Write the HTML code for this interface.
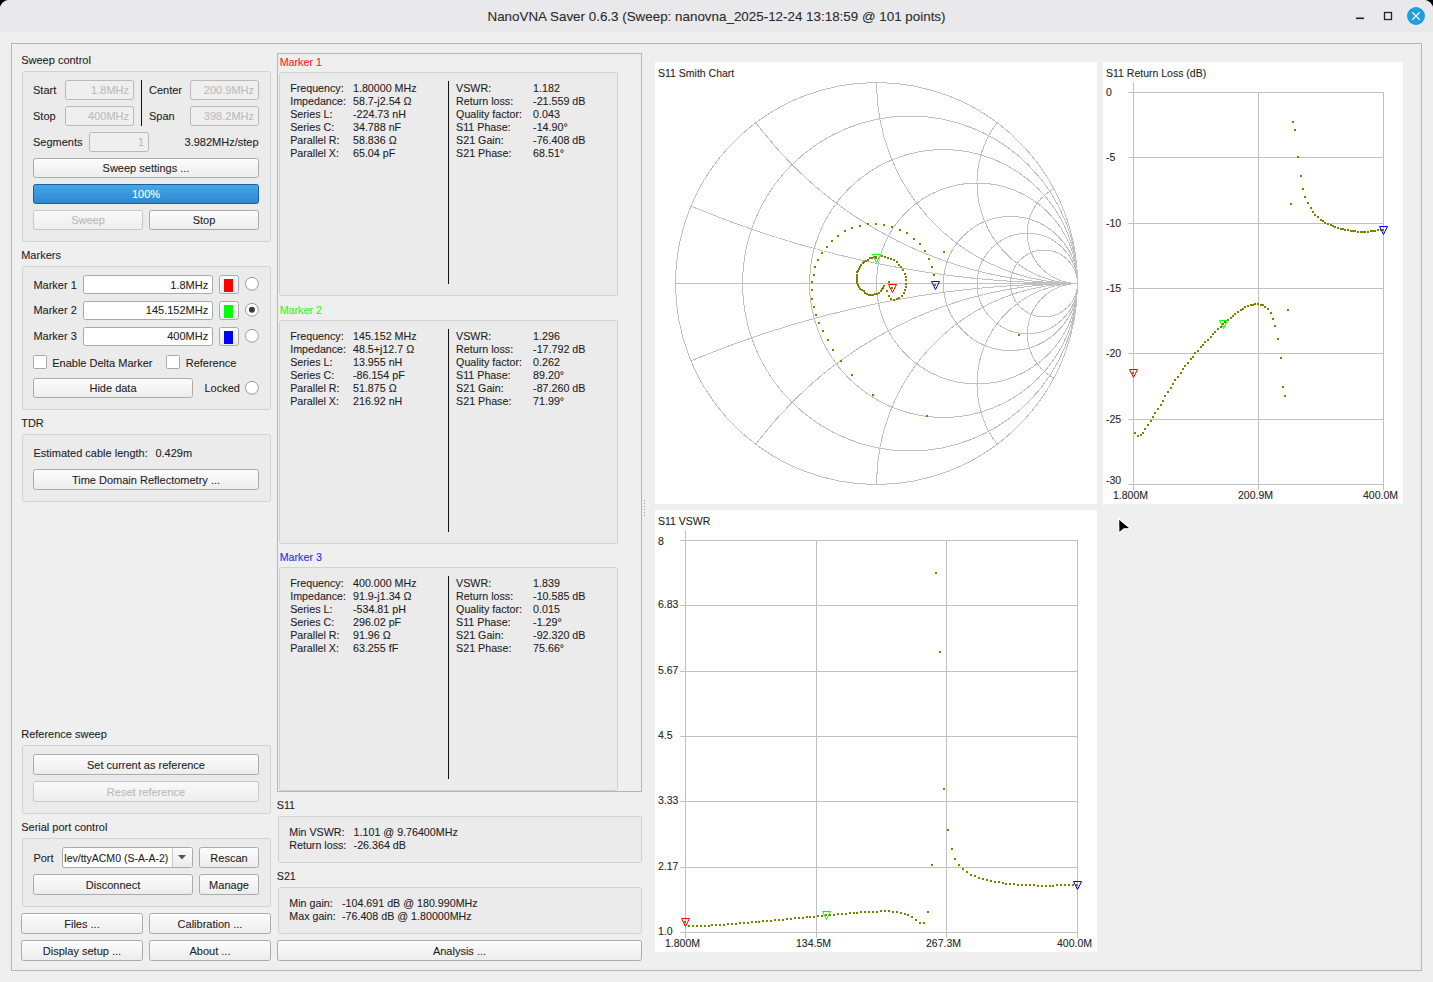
<!DOCTYPE html>
<html><head><meta charset="utf-8"><style>
html,body{margin:0;padding:0;background:#000;overflow:hidden;}
svg{display:block;font-family:"Liberation Sans", sans-serif;}

</style></head><body>
<svg width="1433" height="982" viewBox="0 0 1433 982">
<defs>
<linearGradient id="btn" x1="0" y1="0" x2="0" y2="1"><stop offset="0" stop-color="#fdfdfd"/><stop offset="1" stop-color="#ececec"/></linearGradient>
<linearGradient id="btnd" x1="0" y1="0" x2="0" y2="1"><stop offset="0" stop-color="#f9f9f9"/><stop offset="1" stop-color="#eeeeee"/></linearGradient>
<linearGradient id="prog" x1="0" y1="0" x2="0" y2="1"><stop offset="0" stop-color="#45a8ea"/><stop offset="1" stop-color="#2f87cf"/></linearGradient>
<linearGradient id="combo" x1="0" y1="0" x2="0" y2="1"><stop offset="0" stop-color="#fbfbfb"/><stop offset="1" stop-color="#ececec"/></linearGradient>
</defs>
<rect x="0" y="0" width="1433" height="982" fill="#000"/>
<path d="M0,9 A9,9 0 0,1 9,0 L1424,0 A9,9 0 0,1 1433,9 L1433,982 L0,982 Z" fill="#efefef"/>
<path d="M0,9 A9,9 0 0,1 9,0 L1424,0 A9,9 0 0,1 1433,9 L1433,32 L0,32 Z" fill="#e9e9eb"/>
<text x="716.5" y="21.3" font-size="13.4" fill="#2b2b2b" stroke="#2b2b2b" stroke-width="0.1" text-anchor="middle" font-weight="normal" >NanoVNA Saver 0.6.3 (Sweep: nanovna_2025-12-24 13:18:59 @ 101 points)</text>
<rect x="1356" y="17.5" width="8" height="1.6" fill="#222" stroke="none" stroke-width="1" rx="0" />
<rect x="1384.5" y="12.5" width="7" height="7" fill="none" stroke="#222" stroke-width="1.3" rx="0" />
<circle cx="1416" cy="16" r="9" fill="#1e9de0"/>
<path d="M1412.3,12.3 L1419.7,19.7 M1419.7,12.3 L1412.3,19.7" stroke="#fff" stroke-width="1.3"/>
<rect x="11.5" y="43.5" width="1410" height="927" fill="none" stroke="#b5b5b5" stroke-width="1" rx="0" />
<text x="21.2" y="64" font-size="11" fill="#1f1f1f" stroke="#1f1f1f" stroke-width="0.1" text-anchor="start" font-weight="normal" >Sweep control</text>
<rect x="22.5" y="71.5" width="248" height="170" fill="#ebebeb" stroke="#d2d2d2" stroke-width="1" rx="2" />
<text x="33" y="93.7" font-size="11" fill="#1f1f1f" stroke="#1f1f1f" stroke-width="0.1" text-anchor="start" font-weight="normal" >Start</text>
<rect x="65.5" y="80.5" width="68" height="19" fill="#efefef" stroke="#b9b9b9" stroke-width="1" rx="2" />
<text x="129" y="93.7" font-size="11" fill="#bcbcbc" stroke="#bcbcbc" stroke-width="0.1" text-anchor="end" font-weight="normal" >1.8MHz</text>
<line x1="141.5" y1="80" x2="141.5" y2="126" stroke="#111" stroke-width="1" />
<text x="149" y="93.7" font-size="11" fill="#1f1f1f" stroke="#1f1f1f" stroke-width="0.1" text-anchor="start" font-weight="normal" >Center</text>
<rect x="190.5" y="80.5" width="68" height="19" fill="#efefef" stroke="#b9b9b9" stroke-width="1" rx="2" />
<text x="254" y="93.7" font-size="11" fill="#bcbcbc" stroke="#bcbcbc" stroke-width="0.1" text-anchor="end" font-weight="normal" >200.9MHz</text>
<text x="33" y="119.5" font-size="11" fill="#1f1f1f" stroke="#1f1f1f" stroke-width="0.1" text-anchor="start" font-weight="normal" >Stop</text>
<rect x="65.5" y="106.5" width="68" height="19" fill="#efefef" stroke="#b9b9b9" stroke-width="1" rx="2" />
<text x="129" y="119.5" font-size="11" fill="#bcbcbc" stroke="#bcbcbc" stroke-width="0.1" text-anchor="end" font-weight="normal" >400MHz</text>
<text x="149" y="119.5" font-size="11" fill="#1f1f1f" stroke="#1f1f1f" stroke-width="0.1" text-anchor="start" font-weight="normal" >Span</text>
<rect x="190.5" y="106.5" width="68" height="19" fill="#efefef" stroke="#b9b9b9" stroke-width="1" rx="2" />
<text x="254" y="119.5" font-size="11" fill="#bcbcbc" stroke="#bcbcbc" stroke-width="0.1" text-anchor="end" font-weight="normal" >398.2MHz</text>
<text x="33" y="145.7" font-size="11" fill="#1f1f1f" stroke="#1f1f1f" stroke-width="0.1" text-anchor="start" font-weight="normal" >Segments</text>
<rect x="89.5" y="132.5" width="59" height="19" fill="#efefef" stroke="#b9b9b9" stroke-width="1" rx="2" />
<text x="144" y="145.7" font-size="11" fill="#bcbcbc" stroke="#bcbcbc" stroke-width="0.1" text-anchor="end" font-weight="normal" >1</text>
<text x="258.5" y="145.7" font-size="11" fill="#1f1f1f" stroke="#1f1f1f" stroke-width="0.1" text-anchor="end" font-weight="normal" >3.982MHz/step</text>
<rect x="33.5" y="158.5" width="225" height="19" fill="url(#btn)" stroke="#ababab" stroke-width="1" rx="2" />
<text x="146.0" y="171.7" font-size="11" fill="#1f1f1f" stroke="#1f1f1f" stroke-width="0.1" text-anchor="middle" font-weight="normal" >Sweep settings ...</text>
<rect x="33.5" y="184.5" width="225" height="19" fill="url(#prog)" stroke="#1d5f99" stroke-width="1" rx="2" />
<text x="146" y="197.7" font-size="11" fill="#ffffff" stroke="#ffffff" stroke-width="0.1" text-anchor="middle" font-weight="normal" >100%</text>
<rect x="33.5" y="210.5" width="109" height="19" fill="url(#btnd)" stroke="#c8c8c8" stroke-width="1" rx="2" />
<text x="88.0" y="223.8" font-size="11" fill="#b9b9b9" stroke="#b9b9b9" stroke-width="0.1" text-anchor="middle" font-weight="normal" >Sweep</text>
<rect x="149.5" y="210.5" width="109" height="19" fill="url(#btn)" stroke="#ababab" stroke-width="1" rx="2" />
<text x="204.0" y="223.8" font-size="11" fill="#1f1f1f" stroke="#1f1f1f" stroke-width="0.1" text-anchor="middle" font-weight="normal" >Stop</text>
<text x="21.2" y="258.5" font-size="11" fill="#1f1f1f" stroke="#1f1f1f" stroke-width="0.1" text-anchor="start" font-weight="normal" >Markers</text>
<rect x="22.5" y="266.5" width="248" height="143" fill="#ebebeb" stroke="#d2d2d2" stroke-width="1" rx="2" />
<text x="33.4" y="288.5" font-size="11" fill="#1f1f1f" stroke="#1f1f1f" stroke-width="0.1" text-anchor="start" font-weight="normal" >Marker 1</text>
<rect x="83.5" y="275.5" width="129" height="18" fill="#ffffff" stroke="#a9a9a9" stroke-width="1" rx="2" />
<text x="208.2" y="288.5" font-size="11" fill="#1f1f1f" stroke="#1f1f1f" stroke-width="0.1" text-anchor="end" font-weight="normal" >1.8MHz</text>
<rect x="219.5" y="275.5" width="19" height="18" fill="url(#btn)" stroke="#ababab" stroke-width="1" rx="2" />
<text x="229.0" y="288.5" font-size="11" fill="#1f1f1f" stroke="#1f1f1f" stroke-width="0.1" text-anchor="middle" font-weight="normal" ></text>
<rect x="224" y="279" width="9" height="13" fill="#ff0000" stroke="none" stroke-width="1" rx="0" />
<circle cx="251.9" cy="283.8" r="6.4" fill="#fff" stroke="#9a9a9a" stroke-width="1"/>
<text x="33.4" y="314.3" font-size="11" fill="#1f1f1f" stroke="#1f1f1f" stroke-width="0.1" text-anchor="start" font-weight="normal" >Marker 2</text>
<rect x="83.5" y="301.5" width="129" height="18" fill="#ffffff" stroke="#a9a9a9" stroke-width="1" rx="2" />
<text x="208.2" y="314.3" font-size="11" fill="#1f1f1f" stroke="#1f1f1f" stroke-width="0.1" text-anchor="end" font-weight="normal" >145.152MHz</text>
<rect x="219.5" y="301.5" width="19" height="18" fill="url(#btn)" stroke="#ababab" stroke-width="1" rx="2" />
<text x="229.0" y="314.5" font-size="11" fill="#1f1f1f" stroke="#1f1f1f" stroke-width="0.1" text-anchor="middle" font-weight="normal" ></text>
<rect x="224" y="305" width="9" height="13" fill="#00ff00" stroke="none" stroke-width="1" rx="0" />
<circle cx="251.9" cy="309.8" r="6.4" fill="#fff" stroke="#9a9a9a" stroke-width="1"/>
<circle cx="251.9" cy="309.8" r="3" fill="#3a3a3a"/>
<text x="33.4" y="340.2" font-size="11" fill="#1f1f1f" stroke="#1f1f1f" stroke-width="0.1" text-anchor="start" font-weight="normal" >Marker 3</text>
<rect x="83.5" y="327.5" width="129" height="18" fill="#ffffff" stroke="#a9a9a9" stroke-width="1" rx="2" />
<text x="208.2" y="340.2" font-size="11" fill="#1f1f1f" stroke="#1f1f1f" stroke-width="0.1" text-anchor="end" font-weight="normal" >400MHz</text>
<rect x="219.5" y="327.5" width="19" height="18" fill="url(#btn)" stroke="#ababab" stroke-width="1" rx="2" />
<text x="229.0" y="340.5" font-size="11" fill="#1f1f1f" stroke="#1f1f1f" stroke-width="0.1" text-anchor="middle" font-weight="normal" ></text>
<rect x="224" y="331" width="9" height="13" fill="#0000ff" stroke="none" stroke-width="1" rx="0" />
<circle cx="251.9" cy="335.8" r="6.4" fill="#fff" stroke="#9a9a9a" stroke-width="1"/>
<rect x="33.5" y="355.5" width="13" height="13" fill="#ffffff" stroke="#a9a9a9" stroke-width="1" rx="1" />
<text x="52.2" y="366.6" font-size="11" fill="#1f1f1f" stroke="#1f1f1f" stroke-width="0.1" text-anchor="start" font-weight="normal" >Enable Delta Marker</text>
<rect x="166.5" y="355.5" width="13" height="13" fill="#ffffff" stroke="#a9a9a9" stroke-width="1" rx="1" />
<text x="185.7" y="366.6" font-size="11" fill="#1f1f1f" stroke="#1f1f1f" stroke-width="0.1" text-anchor="start" font-weight="normal" >Reference</text>
<rect x="33.5" y="378.5" width="159" height="19" fill="url(#btn)" stroke="#ababab" stroke-width="1" rx="2" />
<text x="113.0" y="391.5" font-size="11" fill="#1f1f1f" stroke="#1f1f1f" stroke-width="0.1" text-anchor="middle" font-weight="normal" >Hide data</text>
<text x="204.5" y="391.5" font-size="11" fill="#1f1f1f" stroke="#1f1f1f" stroke-width="0.1" text-anchor="start" font-weight="normal" >Locked</text>
<circle cx="251.9" cy="387.8" r="6.4" fill="#fff" stroke="#9a9a9a" stroke-width="1"/>
<text x="21.2" y="426.5" font-size="11" fill="#1f1f1f" stroke="#1f1f1f" stroke-width="0.1" text-anchor="start" font-weight="normal" >TDR</text>
<rect x="22.5" y="434.5" width="248" height="67" fill="#ebebeb" stroke="#d2d2d2" stroke-width="1" rx="2" />
<text x="33.4" y="457" font-size="11" fill="#1f1f1f" stroke="#1f1f1f" stroke-width="0.1" text-anchor="start" font-weight="normal" >Estimated cable length:</text>
<text x="155.4" y="457" font-size="11" fill="#1f1f1f" stroke="#1f1f1f" stroke-width="0.1" text-anchor="start" font-weight="normal" >0.429m</text>
<rect x="33.5" y="469.5" width="225" height="20" fill="url(#btn)" stroke="#ababab" stroke-width="1" rx="2" />
<text x="146.0" y="484.2" font-size="11" fill="#1f1f1f" stroke="#1f1f1f" stroke-width="0.1" text-anchor="middle" font-weight="normal" >Time Domain Reflectometry ...</text>
<text x="21.2" y="737.5" font-size="11" fill="#1f1f1f" stroke="#1f1f1f" stroke-width="0.1" text-anchor="start" font-weight="normal" >Reference sweep</text>
<rect x="22.5" y="745.5" width="248" height="68" fill="#ebebeb" stroke="#d2d2d2" stroke-width="1" rx="2" />
<rect x="33.5" y="754.5" width="225" height="20" fill="url(#btn)" stroke="#ababab" stroke-width="1" rx="2" />
<text x="146.0" y="768.5" font-size="11" fill="#1f1f1f" stroke="#1f1f1f" stroke-width="0.1" text-anchor="middle" font-weight="normal" >Set current as reference</text>
<rect x="33.5" y="781.5" width="225" height="20" fill="url(#btnd)" stroke="#c8c8c8" stroke-width="1" rx="2" />
<text x="146.0" y="795.5" font-size="11" fill="#b9b9b9" stroke="#b9b9b9" stroke-width="0.1" text-anchor="middle" font-weight="normal" >Reset reference</text>
<text x="21.2" y="830.7" font-size="11" fill="#1f1f1f" stroke="#1f1f1f" stroke-width="0.1" text-anchor="start" font-weight="normal" >Serial port control</text>
<rect x="22.5" y="838.5" width="248" height="68" fill="#ebebeb" stroke="#d2d2d2" stroke-width="1" rx="2" />
<text x="33.4" y="861.5" font-size="11" fill="#1f1f1f" stroke="#1f1f1f" stroke-width="0.1" text-anchor="start" font-weight="normal" >Port</text>
<rect x="62.5" y="847.5" width="130" height="20" fill="#ffffff" stroke="#a9a9a9" stroke-width="1" rx="2" />
<rect x="172.5" y="848" width="19.5" height="19" fill="url(#combo)" stroke="none" stroke-width="1" rx="0" />
<line x1="172.5" y1="848" x2="172.5" y2="867" stroke="#c9c9c9" stroke-width="1" />
<path d="M178,855 L186,855 L182,859.5 Z" fill="#555"/>
<clipPath id="cclip"><rect x="63" y="848" width="109" height="19"/></clipPath>
<text x="64.3" y="861.5" font-size="11" fill="#1f1f1f" stroke="#1f1f1f" stroke-width="0.1" text-anchor="start" font-weight="normal" clip-path="url(#cclip)" textLength="104" lengthAdjust="spacingAndGlyphs">lev/ttyACM0 (S-A-A-2)</text>
<rect x="199.5" y="847.5" width="59" height="20" fill="url(#btn)" stroke="#ababab" stroke-width="1" rx="2" />
<text x="229.0" y="861.5" font-size="11" fill="#1f1f1f" stroke="#1f1f1f" stroke-width="0.1" text-anchor="middle" font-weight="normal" >Rescan</text>
<rect x="33.5" y="874.5" width="159" height="20" fill="url(#btn)" stroke="#ababab" stroke-width="1" rx="2" />
<text x="113.0" y="888.8" font-size="11" fill="#1f1f1f" stroke="#1f1f1f" stroke-width="0.1" text-anchor="middle" font-weight="normal" >Disconnect</text>
<rect x="199.5" y="874.5" width="59" height="20" fill="url(#btn)" stroke="#ababab" stroke-width="1" rx="2" />
<text x="229.0" y="888.8" font-size="11" fill="#1f1f1f" stroke="#1f1f1f" stroke-width="0.1" text-anchor="middle" font-weight="normal" >Manage</text>
<rect x="21.5" y="913.5" width="121" height="20" fill="url(#btn)" stroke="#ababab" stroke-width="1" rx="2" />
<text x="82.0" y="927.6" font-size="11" fill="#1f1f1f" stroke="#1f1f1f" stroke-width="0.1" text-anchor="middle" font-weight="normal" >Files ...</text>
<rect x="149.5" y="913.5" width="121" height="20" fill="url(#btn)" stroke="#ababab" stroke-width="1" rx="2" />
<text x="210.0" y="927.6" font-size="11" fill="#1f1f1f" stroke="#1f1f1f" stroke-width="0.1" text-anchor="middle" font-weight="normal" >Calibration ...</text>
<rect x="21.5" y="940.5" width="121" height="20" fill="url(#btn)" stroke="#ababab" stroke-width="1" rx="2" />
<text x="82.0" y="954.6" font-size="11" fill="#1f1f1f" stroke="#1f1f1f" stroke-width="0.1" text-anchor="middle" font-weight="normal" >Display setup ...</text>
<rect x="149.5" y="940.5" width="121" height="20" fill="url(#btn)" stroke="#ababab" stroke-width="1" rx="2" />
<text x="210.0" y="954.6" font-size="11" fill="#1f1f1f" stroke="#1f1f1f" stroke-width="0.1" text-anchor="middle" font-weight="normal" >About ...</text>
<rect x="277.5" y="53.5" width="364" height="738" fill="none" stroke="#b5b5b5" stroke-width="1" rx="0" />
<text x="279.7" y="65.6" font-size="10.7" fill="#ff1a1a" stroke="#ff1a1a" stroke-width="0.1" text-anchor="start" font-weight="normal" >Marker 1</text>
<rect x="279.5" y="72.5" width="338" height="223" fill="#ebebeb" stroke="#d2d2d2" stroke-width="1" rx="2" />
<text x="290.2" y="92.0" font-size="10.7" fill="#1f1f1f" stroke="#1f1f1f" stroke-width="0.1" text-anchor="start" font-weight="normal" >Frequency:</text>
<text x="353" y="92.0" font-size="10.7" fill="#1f1f1f" stroke="#1f1f1f" stroke-width="0.1" text-anchor="start" font-weight="normal" >1.80000 MHz</text>
<text x="290.2" y="105.0" font-size="10.7" fill="#1f1f1f" stroke="#1f1f1f" stroke-width="0.1" text-anchor="start" font-weight="normal" >Impedance:</text>
<text x="353" y="105.0" font-size="10.7" fill="#1f1f1f" stroke="#1f1f1f" stroke-width="0.1" text-anchor="start" font-weight="normal" >58.7-j2.54 Ω</text>
<text x="290.2" y="118.0" font-size="10.7" fill="#1f1f1f" stroke="#1f1f1f" stroke-width="0.1" text-anchor="start" font-weight="normal" >Series L:</text>
<text x="353" y="118.0" font-size="10.7" fill="#1f1f1f" stroke="#1f1f1f" stroke-width="0.1" text-anchor="start" font-weight="normal" >-224.73 nH</text>
<text x="290.2" y="131.0" font-size="10.7" fill="#1f1f1f" stroke="#1f1f1f" stroke-width="0.1" text-anchor="start" font-weight="normal" >Series C:</text>
<text x="353" y="131.0" font-size="10.7" fill="#1f1f1f" stroke="#1f1f1f" stroke-width="0.1" text-anchor="start" font-weight="normal" >34.788 nF</text>
<text x="290.2" y="144.0" font-size="10.7" fill="#1f1f1f" stroke="#1f1f1f" stroke-width="0.1" text-anchor="start" font-weight="normal" >Parallel R:</text>
<text x="353" y="144.0" font-size="10.7" fill="#1f1f1f" stroke="#1f1f1f" stroke-width="0.1" text-anchor="start" font-weight="normal" >58.836 Ω</text>
<text x="290.2" y="157.0" font-size="10.7" fill="#1f1f1f" stroke="#1f1f1f" stroke-width="0.1" text-anchor="start" font-weight="normal" >Parallel X:</text>
<text x="353" y="157.0" font-size="10.7" fill="#1f1f1f" stroke="#1f1f1f" stroke-width="0.1" text-anchor="start" font-weight="normal" >65.04 pF</text>
<line x1="448.5" y1="81" x2="448.5" y2="284" stroke="#111" stroke-width="1" />
<text x="456.1" y="92.0" font-size="10.7" fill="#1f1f1f" stroke="#1f1f1f" stroke-width="0.1" text-anchor="start" font-weight="normal" >VSWR:</text>
<text x="533.1" y="92.0" font-size="10.7" fill="#1f1f1f" stroke="#1f1f1f" stroke-width="0.1" text-anchor="start" font-weight="normal" >1.182</text>
<text x="456.1" y="105.0" font-size="10.7" fill="#1f1f1f" stroke="#1f1f1f" stroke-width="0.1" text-anchor="start" font-weight="normal" >Return loss:</text>
<text x="533.1" y="105.0" font-size="10.7" fill="#1f1f1f" stroke="#1f1f1f" stroke-width="0.1" text-anchor="start" font-weight="normal" >-21.559 dB</text>
<text x="456.1" y="118.0" font-size="10.7" fill="#1f1f1f" stroke="#1f1f1f" stroke-width="0.1" text-anchor="start" font-weight="normal" >Quality factor:</text>
<text x="533.1" y="118.0" font-size="10.7" fill="#1f1f1f" stroke="#1f1f1f" stroke-width="0.1" text-anchor="start" font-weight="normal" >0.043</text>
<text x="456.1" y="131.0" font-size="10.7" fill="#1f1f1f" stroke="#1f1f1f" stroke-width="0.1" text-anchor="start" font-weight="normal" >S11 Phase:</text>
<text x="533.1" y="131.0" font-size="10.7" fill="#1f1f1f" stroke="#1f1f1f" stroke-width="0.1" text-anchor="start" font-weight="normal" >-14.90°</text>
<text x="456.1" y="144.0" font-size="10.7" fill="#1f1f1f" stroke="#1f1f1f" stroke-width="0.1" text-anchor="start" font-weight="normal" >S21 Gain:</text>
<text x="533.1" y="144.0" font-size="10.7" fill="#1f1f1f" stroke="#1f1f1f" stroke-width="0.1" text-anchor="start" font-weight="normal" >-76.408 dB</text>
<text x="456.1" y="157.0" font-size="10.7" fill="#1f1f1f" stroke="#1f1f1f" stroke-width="0.1" text-anchor="start" font-weight="normal" >S21 Phase:</text>
<text x="533.1" y="157.0" font-size="10.7" fill="#1f1f1f" stroke="#1f1f1f" stroke-width="0.1" text-anchor="start" font-weight="normal" >68.51°</text>
<text x="279.7" y="313.6" font-size="10.7" fill="#1aff1a" stroke="#1aff1a" stroke-width="0.1" text-anchor="start" font-weight="normal" >Marker 2</text>
<rect x="279.5" y="320.5" width="338" height="223" fill="#ebebeb" stroke="#d2d2d2" stroke-width="1" rx="2" />
<text x="290.2" y="340.0" font-size="10.7" fill="#1f1f1f" stroke="#1f1f1f" stroke-width="0.1" text-anchor="start" font-weight="normal" >Frequency:</text>
<text x="353" y="340.0" font-size="10.7" fill="#1f1f1f" stroke="#1f1f1f" stroke-width="0.1" text-anchor="start" font-weight="normal" >145.152 MHz</text>
<text x="290.2" y="353.0" font-size="10.7" fill="#1f1f1f" stroke="#1f1f1f" stroke-width="0.1" text-anchor="start" font-weight="normal" >Impedance:</text>
<text x="353" y="353.0" font-size="10.7" fill="#1f1f1f" stroke="#1f1f1f" stroke-width="0.1" text-anchor="start" font-weight="normal" >48.5+j12.7 Ω</text>
<text x="290.2" y="366.0" font-size="10.7" fill="#1f1f1f" stroke="#1f1f1f" stroke-width="0.1" text-anchor="start" font-weight="normal" >Series L:</text>
<text x="353" y="366.0" font-size="10.7" fill="#1f1f1f" stroke="#1f1f1f" stroke-width="0.1" text-anchor="start" font-weight="normal" >13.955 nH</text>
<text x="290.2" y="379.0" font-size="10.7" fill="#1f1f1f" stroke="#1f1f1f" stroke-width="0.1" text-anchor="start" font-weight="normal" >Series C:</text>
<text x="353" y="379.0" font-size="10.7" fill="#1f1f1f" stroke="#1f1f1f" stroke-width="0.1" text-anchor="start" font-weight="normal" >-86.154 pF</text>
<text x="290.2" y="392.0" font-size="10.7" fill="#1f1f1f" stroke="#1f1f1f" stroke-width="0.1" text-anchor="start" font-weight="normal" >Parallel R:</text>
<text x="353" y="392.0" font-size="10.7" fill="#1f1f1f" stroke="#1f1f1f" stroke-width="0.1" text-anchor="start" font-weight="normal" >51.875 Ω</text>
<text x="290.2" y="405.0" font-size="10.7" fill="#1f1f1f" stroke="#1f1f1f" stroke-width="0.1" text-anchor="start" font-weight="normal" >Parallel X:</text>
<text x="353" y="405.0" font-size="10.7" fill="#1f1f1f" stroke="#1f1f1f" stroke-width="0.1" text-anchor="start" font-weight="normal" >216.92 nH</text>
<line x1="448.5" y1="329" x2="448.5" y2="532" stroke="#111" stroke-width="1" />
<text x="456.1" y="340.0" font-size="10.7" fill="#1f1f1f" stroke="#1f1f1f" stroke-width="0.1" text-anchor="start" font-weight="normal" >VSWR:</text>
<text x="533.1" y="340.0" font-size="10.7" fill="#1f1f1f" stroke="#1f1f1f" stroke-width="0.1" text-anchor="start" font-weight="normal" >1.296</text>
<text x="456.1" y="353.0" font-size="10.7" fill="#1f1f1f" stroke="#1f1f1f" stroke-width="0.1" text-anchor="start" font-weight="normal" >Return loss:</text>
<text x="533.1" y="353.0" font-size="10.7" fill="#1f1f1f" stroke="#1f1f1f" stroke-width="0.1" text-anchor="start" font-weight="normal" >-17.792 dB</text>
<text x="456.1" y="366.0" font-size="10.7" fill="#1f1f1f" stroke="#1f1f1f" stroke-width="0.1" text-anchor="start" font-weight="normal" >Quality factor:</text>
<text x="533.1" y="366.0" font-size="10.7" fill="#1f1f1f" stroke="#1f1f1f" stroke-width="0.1" text-anchor="start" font-weight="normal" >0.262</text>
<text x="456.1" y="379.0" font-size="10.7" fill="#1f1f1f" stroke="#1f1f1f" stroke-width="0.1" text-anchor="start" font-weight="normal" >S11 Phase:</text>
<text x="533.1" y="379.0" font-size="10.7" fill="#1f1f1f" stroke="#1f1f1f" stroke-width="0.1" text-anchor="start" font-weight="normal" >89.20°</text>
<text x="456.1" y="392.0" font-size="10.7" fill="#1f1f1f" stroke="#1f1f1f" stroke-width="0.1" text-anchor="start" font-weight="normal" >S21 Gain:</text>
<text x="533.1" y="392.0" font-size="10.7" fill="#1f1f1f" stroke="#1f1f1f" stroke-width="0.1" text-anchor="start" font-weight="normal" >-87.260 dB</text>
<text x="456.1" y="405.0" font-size="10.7" fill="#1f1f1f" stroke="#1f1f1f" stroke-width="0.1" text-anchor="start" font-weight="normal" >S21 Phase:</text>
<text x="533.1" y="405.0" font-size="10.7" fill="#1f1f1f" stroke="#1f1f1f" stroke-width="0.1" text-anchor="start" font-weight="normal" >71.99°</text>
<text x="279.7" y="560.6" font-size="10.7" fill="#2a2aff" stroke="#2a2aff" stroke-width="0.1" text-anchor="start" font-weight="normal" >Marker 3</text>
<rect x="279.5" y="567.5" width="338" height="223" fill="#ebebeb" stroke="#d2d2d2" stroke-width="1" rx="2" />
<text x="290.2" y="587.0" font-size="10.7" fill="#1f1f1f" stroke="#1f1f1f" stroke-width="0.1" text-anchor="start" font-weight="normal" >Frequency:</text>
<text x="353" y="587.0" font-size="10.7" fill="#1f1f1f" stroke="#1f1f1f" stroke-width="0.1" text-anchor="start" font-weight="normal" >400.000 MHz</text>
<text x="290.2" y="600.0" font-size="10.7" fill="#1f1f1f" stroke="#1f1f1f" stroke-width="0.1" text-anchor="start" font-weight="normal" >Impedance:</text>
<text x="353" y="600.0" font-size="10.7" fill="#1f1f1f" stroke="#1f1f1f" stroke-width="0.1" text-anchor="start" font-weight="normal" >91.9-j1.34 Ω</text>
<text x="290.2" y="613.0" font-size="10.7" fill="#1f1f1f" stroke="#1f1f1f" stroke-width="0.1" text-anchor="start" font-weight="normal" >Series L:</text>
<text x="353" y="613.0" font-size="10.7" fill="#1f1f1f" stroke="#1f1f1f" stroke-width="0.1" text-anchor="start" font-weight="normal" >-534.81 pH</text>
<text x="290.2" y="626.0" font-size="10.7" fill="#1f1f1f" stroke="#1f1f1f" stroke-width="0.1" text-anchor="start" font-weight="normal" >Series C:</text>
<text x="353" y="626.0" font-size="10.7" fill="#1f1f1f" stroke="#1f1f1f" stroke-width="0.1" text-anchor="start" font-weight="normal" >296.02 pF</text>
<text x="290.2" y="639.0" font-size="10.7" fill="#1f1f1f" stroke="#1f1f1f" stroke-width="0.1" text-anchor="start" font-weight="normal" >Parallel R:</text>
<text x="353" y="639.0" font-size="10.7" fill="#1f1f1f" stroke="#1f1f1f" stroke-width="0.1" text-anchor="start" font-weight="normal" >91.96 Ω</text>
<text x="290.2" y="652.0" font-size="10.7" fill="#1f1f1f" stroke="#1f1f1f" stroke-width="0.1" text-anchor="start" font-weight="normal" >Parallel X:</text>
<text x="353" y="652.0" font-size="10.7" fill="#1f1f1f" stroke="#1f1f1f" stroke-width="0.1" text-anchor="start" font-weight="normal" >63.255 fF</text>
<line x1="448.5" y1="576" x2="448.5" y2="779" stroke="#111" stroke-width="1" />
<text x="456.1" y="587.0" font-size="10.7" fill="#1f1f1f" stroke="#1f1f1f" stroke-width="0.1" text-anchor="start" font-weight="normal" >VSWR:</text>
<text x="533.1" y="587.0" font-size="10.7" fill="#1f1f1f" stroke="#1f1f1f" stroke-width="0.1" text-anchor="start" font-weight="normal" >1.839</text>
<text x="456.1" y="600.0" font-size="10.7" fill="#1f1f1f" stroke="#1f1f1f" stroke-width="0.1" text-anchor="start" font-weight="normal" >Return loss:</text>
<text x="533.1" y="600.0" font-size="10.7" fill="#1f1f1f" stroke="#1f1f1f" stroke-width="0.1" text-anchor="start" font-weight="normal" >-10.585 dB</text>
<text x="456.1" y="613.0" font-size="10.7" fill="#1f1f1f" stroke="#1f1f1f" stroke-width="0.1" text-anchor="start" font-weight="normal" >Quality factor:</text>
<text x="533.1" y="613.0" font-size="10.7" fill="#1f1f1f" stroke="#1f1f1f" stroke-width="0.1" text-anchor="start" font-weight="normal" >0.015</text>
<text x="456.1" y="626.0" font-size="10.7" fill="#1f1f1f" stroke="#1f1f1f" stroke-width="0.1" text-anchor="start" font-weight="normal" >S11 Phase:</text>
<text x="533.1" y="626.0" font-size="10.7" fill="#1f1f1f" stroke="#1f1f1f" stroke-width="0.1" text-anchor="start" font-weight="normal" >-1.29°</text>
<text x="456.1" y="639.0" font-size="10.7" fill="#1f1f1f" stroke="#1f1f1f" stroke-width="0.1" text-anchor="start" font-weight="normal" >S21 Gain:</text>
<text x="533.1" y="639.0" font-size="10.7" fill="#1f1f1f" stroke="#1f1f1f" stroke-width="0.1" text-anchor="start" font-weight="normal" >-92.320 dB</text>
<text x="456.1" y="652.0" font-size="10.7" fill="#1f1f1f" stroke="#1f1f1f" stroke-width="0.1" text-anchor="start" font-weight="normal" >S21 Phase:</text>
<text x="533.1" y="652.0" font-size="10.7" fill="#1f1f1f" stroke="#1f1f1f" stroke-width="0.1" text-anchor="start" font-weight="normal" >75.66°</text>
<text x="276.8" y="808.7" font-size="10.7" fill="#1f1f1f" stroke="#1f1f1f" stroke-width="0.1" text-anchor="start" font-weight="normal" >S11</text>
<rect x="278.5" y="816.5" width="363" height="46" fill="#ebebeb" stroke="#d2d2d2" stroke-width="1" rx="2" />
<text x="289.3" y="836" font-size="10.7" fill="#1f1f1f" stroke="#1f1f1f" stroke-width="0.1" text-anchor="start" font-weight="normal" >Min VSWR:</text>
<text x="353.6" y="836" font-size="10.7" fill="#1f1f1f" stroke="#1f1f1f" stroke-width="0.1" text-anchor="start" font-weight="normal" >1.101 @ 9.76400MHz</text>
<text x="289.3" y="849" font-size="10.7" fill="#1f1f1f" stroke="#1f1f1f" stroke-width="0.1" text-anchor="start" font-weight="normal" >Return loss:</text>
<text x="353.6" y="849" font-size="10.7" fill="#1f1f1f" stroke="#1f1f1f" stroke-width="0.1" text-anchor="start" font-weight="normal" >-26.364 dB</text>
<text x="276.8" y="879.7" font-size="10.7" fill="#1f1f1f" stroke="#1f1f1f" stroke-width="0.1" text-anchor="start" font-weight="normal" >S21</text>
<rect x="278.5" y="887.5" width="363" height="46" fill="#ebebeb" stroke="#d2d2d2" stroke-width="1" rx="2" />
<text x="289.3" y="906.7" font-size="10.7" fill="#1f1f1f" stroke="#1f1f1f" stroke-width="0.1" text-anchor="start" font-weight="normal" >Min gain:</text>
<text x="342" y="906.7" font-size="10.7" fill="#1f1f1f" stroke="#1f1f1f" stroke-width="0.1" text-anchor="start" font-weight="normal" >-104.691 dB @ 180.990MHz</text>
<text x="289.3" y="919.7" font-size="10.7" fill="#1f1f1f" stroke="#1f1f1f" stroke-width="0.1" text-anchor="start" font-weight="normal" >Max gain:</text>
<text x="342" y="919.7" font-size="10.7" fill="#1f1f1f" stroke="#1f1f1f" stroke-width="0.1" text-anchor="start" font-weight="normal" >-76.408 dB @ 1.80000MHz</text>
<rect x="277.5" y="940.5" width="364" height="20" fill="url(#btn)" stroke="#ababab" stroke-width="1" rx="2" />
<text x="459.5" y="954.6" font-size="11" fill="#1f1f1f" stroke="#1f1f1f" stroke-width="0.1" text-anchor="middle" font-weight="normal" >Analysis ...</text>
<rect x="644" y="500" width="1" height="1" fill="#9a9a9a" stroke="none" stroke-width="1" rx="0" />
<rect x="644" y="503" width="1" height="1" fill="#9a9a9a" stroke="none" stroke-width="1" rx="0" />
<rect x="644" y="506" width="1" height="1" fill="#9a9a9a" stroke="none" stroke-width="1" rx="0" />
<rect x="644" y="509" width="1" height="1" fill="#9a9a9a" stroke="none" stroke-width="1" rx="0" />
<rect x="644" y="512" width="1" height="1" fill="#9a9a9a" stroke="none" stroke-width="1" rx="0" />
<rect x="644" y="515" width="1" height="1" fill="#9a9a9a" stroke="none" stroke-width="1" rx="0" />
<rect x="655" y="62" width="442" height="442" fill="#ffffff" stroke="none" stroke-width="1" rx="0" />
<rect x="1103" y="62" width="300" height="442" fill="#ffffff" stroke="none" stroke-width="1" rx="0" />
<rect x="655" y="510" width="442" height="442" fill="#ffffff" stroke="none" stroke-width="1" rx="0" />
<text x="658" y="76.5" font-size="10.5" fill="#1f1f1f" stroke="#1f1f1f" stroke-width="0.1" text-anchor="start" font-weight="normal" >S11 Smith Chart</text>
<text x="1106" y="76.5" font-size="10.5" fill="#1f1f1f" stroke="#1f1f1f" stroke-width="0.1" text-anchor="start" font-weight="normal" >S11 Return Loss (dB)</text>
<text x="658" y="524.5" font-size="10.5" fill="#1f1f1f" stroke="#1f1f1f" stroke-width="0.1" text-anchor="start" font-weight="normal" >S11 VSWR</text>
<g fill="none" stroke="#c0c0c0" stroke-width="1" shape-rendering="crispEdges">
<circle cx="876.5" cy="283.5" r="201"/>
<line x1="675.5" y1="283.5" x2="1077.5" y2="283.5"/>
<circle cx="910.00" cy="283.5" r="167.50"/>
<circle cx="943.50" cy="283.5" r="134.00"/>
<circle cx="977.00" cy="283.5" r="100.50"/>
<circle cx="1010.50" cy="283.5" r="67.00"/>
<circle cx="1027.25" cy="283.5" r="50.25"/>
<circle cx="1044.00" cy="283.5" r="33.50"/>
<path d="M1077.50,283.50 A1005.00,1005.00 0 0,1 690.96,206.19"/>
<path d="M1077.50,283.50 A1005.00,1005.00 0 0,0 690.96,360.81"/>
<path d="M1077.50,283.50 A402.00,402.00 0 0,1 755.90,122.70"/>
<path d="M1077.50,283.50 A402.00,402.00 0 0,0 755.90,444.30"/>
<path d="M1077.50,283.50 A201.00,201.00 0 0,1 876.50,82.50"/>
<path d="M1077.50,283.50 A201.00,201.00 0 0,0 876.50,484.50"/>
<path d="M1077.50,283.50 A100.50,100.50 0 0,1 997.10,122.70"/>
<path d="M1077.50,283.50 A100.50,100.50 0 0,0 997.10,444.30"/>
<path d="M1077.50,283.50 A50.25,50.25 0 0,1 1053.85,188.91"/>
<path d="M1077.50,283.50 A50.25,50.25 0 0,0 1053.85,378.09"/>
</g>
<rect x="883" y="285" width="2" height="2" fill="#808000"/>
<rect x="882" y="287" width="2" height="2" fill="#808000"/>
<rect x="881" y="288" width="2" height="2" fill="#808000"/>
<rect x="880" y="290" width="2" height="2" fill="#808000"/>
<rect x="878" y="292" width="2" height="2" fill="#808000"/>
<rect x="876" y="293" width="2" height="2" fill="#808000"/>
<rect x="874" y="293" width="2" height="2" fill="#808000"/>
<rect x="872" y="294" width="2" height="2" fill="#808000"/>
<rect x="870" y="294" width="2" height="2" fill="#808000"/>
<rect x="868" y="294" width="2" height="2" fill="#808000"/>
<rect x="866" y="293" width="2" height="2" fill="#808000"/>
<rect x="864" y="292" width="2" height="2" fill="#808000"/>
<rect x="863" y="290" width="2" height="2" fill="#808000"/>
<rect x="861" y="289" width="2" height="2" fill="#808000"/>
<rect x="859" y="288" width="2" height="2" fill="#808000"/>
<rect x="858" y="286" width="2" height="2" fill="#808000"/>
<rect x="857" y="284" width="2" height="2" fill="#808000"/>
<rect x="856" y="282" width="2" height="2" fill="#808000"/>
<rect x="856" y="280" width="2" height="2" fill="#808000"/>
<rect x="856" y="278" width="2" height="2" fill="#808000"/>
<rect x="856" y="276" width="2" height="2" fill="#808000"/>
<rect x="856" y="274" width="2" height="2" fill="#808000"/>
<rect x="856" y="271" width="2" height="2" fill="#808000"/>
<rect x="857" y="270" width="2" height="2" fill="#808000"/>
<rect x="858" y="268" width="2" height="2" fill="#808000"/>
<rect x="859" y="266" width="2" height="2" fill="#808000"/>
<rect x="860" y="264" width="2" height="2" fill="#808000"/>
<rect x="862" y="262" width="2" height="2" fill="#808000"/>
<rect x="863" y="261" width="2" height="2" fill="#808000"/>
<rect x="865" y="260" width="2" height="2" fill="#808000"/>
<rect x="867" y="259" width="2" height="2" fill="#808000"/>
<rect x="869" y="257" width="2" height="2" fill="#808000"/>
<rect x="871" y="257" width="2" height="2" fill="#808000"/>
<rect x="873" y="256" width="2" height="2" fill="#808000"/>
<rect x="875" y="256" width="2" height="2" fill="#808000"/>
<rect x="881" y="255" width="2" height="2" fill="#808000"/>
<rect x="884" y="256" width="2" height="2" fill="#808000"/>
<rect x="887" y="257" width="2" height="2" fill="#808000"/>
<rect x="890" y="258" width="2" height="2" fill="#808000"/>
<rect x="893" y="259" width="2" height="2" fill="#808000"/>
<rect x="896" y="261" width="2" height="2" fill="#808000"/>
<rect x="898" y="264" width="2" height="2" fill="#808000"/>
<rect x="900" y="266" width="2" height="2" fill="#808000"/>
<rect x="902" y="269" width="2" height="2" fill="#808000"/>
<rect x="904" y="273" width="2" height="2" fill="#808000"/>
<rect x="905" y="276" width="2" height="2" fill="#808000"/>
<rect x="905" y="279" width="2" height="2" fill="#808000"/>
<rect x="905" y="283" width="2" height="2" fill="#808000"/>
<rect x="905" y="286" width="2" height="2" fill="#808000"/>
<rect x="904" y="289" width="2" height="2" fill="#808000"/>
<rect x="903" y="292" width="2" height="2" fill="#808000"/>
<rect x="901" y="295" width="2" height="2" fill="#808000"/>
<rect x="898" y="297" width="2" height="2" fill="#808000"/>
<rect x="896" y="298" width="2" height="2" fill="#808000"/>
<rect x="893" y="299" width="2" height="2" fill="#808000"/>
<rect x="890" y="298" width="2" height="2" fill="#808000"/>
<rect x="888" y="295" width="2" height="2" fill="#808000"/>
<rect x="886" y="290" width="2" height="2" fill="#808000"/>
<rect x="888" y="281" width="2" height="2" fill="#808000"/>
<rect x="943" y="251" width="2" height="2" fill="#808000"/>
<rect x="1018" y="334" width="2" height="2" fill="#808000"/>
<rect x="926" y="415" width="2" height="2" fill="#808000"/>
<rect x="872" y="394" width="2" height="2" fill="#808000"/>
<rect x="851" y="374" width="2" height="2" fill="#808000"/>
<rect x="840" y="360" width="2" height="2" fill="#808000"/>
<rect x="832" y="349" width="2" height="2" fill="#808000"/>
<rect x="827" y="339" width="2" height="2" fill="#808000"/>
<rect x="822" y="330" width="2" height="2" fill="#808000"/>
<rect x="818" y="322" width="2" height="2" fill="#808000"/>
<rect x="815" y="314" width="2" height="2" fill="#808000"/>
<rect x="813" y="306" width="2" height="2" fill="#808000"/>
<rect x="811" y="298" width="2" height="2" fill="#808000"/>
<rect x="811" y="289" width="2" height="2" fill="#808000"/>
<rect x="811" y="281" width="2" height="2" fill="#808000"/>
<rect x="813" y="274" width="2" height="2" fill="#808000"/>
<rect x="814" y="266" width="2" height="2" fill="#808000"/>
<rect x="817" y="259" width="2" height="2" fill="#808000"/>
<rect x="821" y="252" width="2" height="2" fill="#808000"/>
<rect x="826" y="246" width="2" height="2" fill="#808000"/>
<rect x="831" y="240" width="2" height="2" fill="#808000"/>
<rect x="837" y="235" width="2" height="2" fill="#808000"/>
<rect x="844" y="230" width="2" height="2" fill="#808000"/>
<rect x="851" y="227" width="2" height="2" fill="#808000"/>
<rect x="859" y="225" width="2" height="2" fill="#808000"/>
<rect x="867" y="223" width="2" height="2" fill="#808000"/>
<rect x="875" y="223" width="2" height="2" fill="#808000"/>
<rect x="883" y="224" width="2" height="2" fill="#808000"/>
<rect x="891" y="226" width="2" height="2" fill="#808000"/>
<rect x="899" y="229" width="2" height="2" fill="#808000"/>
<rect x="906" y="232" width="2" height="2" fill="#808000"/>
<rect x="913" y="238" width="2" height="2" fill="#808000"/>
<rect x="919" y="243" width="2" height="2" fill="#808000"/>
<rect x="924" y="250" width="2" height="2" fill="#808000"/>
<rect x="928" y="258" width="2" height="2" fill="#808000"/>
<rect x="931" y="266" width="2" height="2" fill="#808000"/>
<rect x="933" y="274" width="2" height="2" fill="#808000"/>
<rect x="934" y="284" width="2" height="2" fill="#808000"/>
<rect x="891" y="287" width="2" height="2" fill="#808000"/>
<rect x="875" y="257" width="2" height="2" fill="#808000"/>
<path d="M892.5,292.5 L888.5,284.5 L896.5,284.5 Z" fill="none" stroke="#ff0000" stroke-width="1"/>
<path d="M876.5,262.5 L872.5,254.5 L880.5,254.5 Z" fill="none" stroke="#00ff00" stroke-width="1"/>
<path d="M935.5,289.5 L931.5,281.5 L939.5,281.5 Z" fill="none" stroke="#0000ff" stroke-width="1"/>
<rect x="1133" y="82" width="1" height="408" fill="#c0c0c0" stroke="none" stroke-width="1" rx="0" />
<rect x="1258" y="92" width="1" height="398" fill="#c0c0c0" stroke="none" stroke-width="1" rx="0" />
<rect x="1383" y="92" width="1" height="398" fill="#c0c0c0" stroke="none" stroke-width="1" rx="0" />
<rect x="1128" y="92" width="256" height="1" fill="#c0c0c0" stroke="none" stroke-width="1" rx="0" />
<text x="1106" y="95.8" font-size="10.5" fill="#1f1f1f" stroke="#1f1f1f" stroke-width="0.1" text-anchor="start" font-weight="normal" >0</text>
<rect x="1128" y="157" width="256" height="1" fill="#c0c0c0" stroke="none" stroke-width="1" rx="0" />
<text x="1106" y="160.8" font-size="10.5" fill="#1f1f1f" stroke="#1f1f1f" stroke-width="0.1" text-anchor="start" font-weight="normal" >-5</text>
<rect x="1128" y="223" width="256" height="1" fill="#c0c0c0" stroke="none" stroke-width="1" rx="0" />
<text x="1106" y="226.8" font-size="10.5" fill="#1f1f1f" stroke="#1f1f1f" stroke-width="0.1" text-anchor="start" font-weight="normal" >-10</text>
<rect x="1128" y="288" width="256" height="1" fill="#c0c0c0" stroke="none" stroke-width="1" rx="0" />
<text x="1106" y="291.8" font-size="10.5" fill="#1f1f1f" stroke="#1f1f1f" stroke-width="0.1" text-anchor="start" font-weight="normal" >-15</text>
<rect x="1128" y="353" width="256" height="1" fill="#c0c0c0" stroke="none" stroke-width="1" rx="0" />
<text x="1106" y="356.8" font-size="10.5" fill="#1f1f1f" stroke="#1f1f1f" stroke-width="0.1" text-anchor="start" font-weight="normal" >-20</text>
<rect x="1128" y="419" width="256" height="1" fill="#c0c0c0" stroke="none" stroke-width="1" rx="0" />
<text x="1106" y="422.8" font-size="10.5" fill="#1f1f1f" stroke="#1f1f1f" stroke-width="0.1" text-anchor="start" font-weight="normal" >-25</text>
<rect x="1128" y="484" width="256" height="1" fill="#c0c0c0" stroke="none" stroke-width="1" rx="0" />
<text x="1106" y="484" font-size="10.5" fill="#1f1f1f" stroke="#1f1f1f" stroke-width="0.1" text-anchor="start" font-weight="normal" >-30</text>
<text x="1113" y="498.5" font-size="10.5" fill="#1f1f1f" stroke="#1f1f1f" stroke-width="0.1" text-anchor="start" font-weight="normal" >1.800M</text>
<text x="1238" y="498.5" font-size="10.5" fill="#1f1f1f" stroke="#1f1f1f" stroke-width="0.1" text-anchor="start" font-weight="normal" >200.9M</text>
<text x="1363" y="498.5" font-size="10.5" fill="#1f1f1f" stroke="#1f1f1f" stroke-width="0.1" text-anchor="start" font-weight="normal" >400.0M</text>
<rect x="1132" y="372" width="2" height="2" fill="#808000"/>
<rect x="1134" y="432" width="2" height="2" fill="#808000"/>
<rect x="1137" y="435" width="2" height="2" fill="#808000"/>
<rect x="1140" y="434" width="2" height="2" fill="#808000"/>
<rect x="1142" y="432" width="2" height="2" fill="#808000"/>
<rect x="1144" y="428" width="2" height="2" fill="#808000"/>
<rect x="1147" y="424" width="2" height="2" fill="#808000"/>
<rect x="1150" y="420" width="2" height="2" fill="#808000"/>
<rect x="1152" y="416" width="2" height="2" fill="#808000"/>
<rect x="1154" y="412" width="2" height="2" fill="#808000"/>
<rect x="1157" y="408" width="2" height="2" fill="#808000"/>
<rect x="1160" y="404" width="2" height="2" fill="#808000"/>
<rect x="1162" y="400" width="2" height="2" fill="#808000"/>
<rect x="1164" y="395" width="2" height="2" fill="#808000"/>
<rect x="1167" y="391" width="2" height="2" fill="#808000"/>
<rect x="1170" y="387" width="2" height="2" fill="#808000"/>
<rect x="1172" y="383" width="2" height="2" fill="#808000"/>
<rect x="1174" y="379" width="2" height="2" fill="#808000"/>
<rect x="1177" y="376" width="2" height="2" fill="#808000"/>
<rect x="1180" y="372" width="2" height="2" fill="#808000"/>
<rect x="1182" y="368" width="2" height="2" fill="#808000"/>
<rect x="1184" y="365" width="2" height="2" fill="#808000"/>
<rect x="1187" y="362" width="2" height="2" fill="#808000"/>
<rect x="1190" y="358" width="2" height="2" fill="#808000"/>
<rect x="1192" y="356" width="2" height="2" fill="#808000"/>
<rect x="1194" y="352" width="2" height="2" fill="#808000"/>
<rect x="1197" y="350" width="2" height="2" fill="#808000"/>
<rect x="1200" y="346" width="2" height="2" fill="#808000"/>
<rect x="1202" y="344" width="2" height="2" fill="#808000"/>
<rect x="1204" y="341" width="2" height="2" fill="#808000"/>
<rect x="1207" y="339" width="2" height="2" fill="#808000"/>
<rect x="1210" y="336" width="2" height="2" fill="#808000"/>
<rect x="1212" y="333" width="2" height="2" fill="#808000"/>
<rect x="1214" y="331" width="2" height="2" fill="#808000"/>
<rect x="1217" y="328" width="2" height="2" fill="#808000"/>
<rect x="1220" y="326" width="2" height="2" fill="#808000"/>
<rect x="1222" y="323" width="2" height="2" fill="#808000"/>
<rect x="1224" y="321" width="2" height="2" fill="#808000"/>
<rect x="1227" y="319" width="2" height="2" fill="#808000"/>
<rect x="1230" y="317" width="2" height="2" fill="#808000"/>
<rect x="1232" y="315" width="2" height="2" fill="#808000"/>
<rect x="1234" y="313" width="2" height="2" fill="#808000"/>
<rect x="1237" y="311" width="2" height="2" fill="#808000"/>
<rect x="1240" y="309" width="2" height="2" fill="#808000"/>
<rect x="1242" y="308" width="2" height="2" fill="#808000"/>
<rect x="1244" y="306" width="2" height="2" fill="#808000"/>
<rect x="1247" y="305" width="2" height="2" fill="#808000"/>
<rect x="1250" y="304" width="2" height="2" fill="#808000"/>
<rect x="1252" y="304" width="2" height="2" fill="#808000"/>
<rect x="1254" y="303" width="2" height="2" fill="#808000"/>
<rect x="1257" y="303" width="2" height="2" fill="#808000"/>
<rect x="1260" y="304" width="2" height="2" fill="#808000"/>
<rect x="1262" y="304" width="2" height="2" fill="#808000"/>
<rect x="1264" y="306" width="2" height="2" fill="#808000"/>
<rect x="1267" y="308" width="2" height="2" fill="#808000"/>
<rect x="1270" y="312" width="2" height="2" fill="#808000"/>
<rect x="1272" y="318" width="2" height="2" fill="#808000"/>
<rect x="1274" y="325" width="2" height="2" fill="#808000"/>
<rect x="1277" y="338" width="2" height="2" fill="#808000"/>
<rect x="1280" y="357" width="2" height="2" fill="#808000"/>
<rect x="1282" y="386" width="2" height="2" fill="#808000"/>
<rect x="1284" y="395" width="2" height="2" fill="#808000"/>
<rect x="1287" y="309" width="2" height="2" fill="#808000"/>
<rect x="1290" y="203" width="2" height="2" fill="#808000"/>
<rect x="1292" y="121" width="2" height="2" fill="#808000"/>
<rect x="1294" y="129" width="2" height="2" fill="#808000"/>
<rect x="1297" y="156" width="2" height="2" fill="#808000"/>
<rect x="1300" y="175" width="2" height="2" fill="#808000"/>
<rect x="1302" y="188" width="2" height="2" fill="#808000"/>
<rect x="1304" y="196" width="2" height="2" fill="#808000"/>
<rect x="1307" y="202" width="2" height="2" fill="#808000"/>
<rect x="1310" y="207" width="2" height="2" fill="#808000"/>
<rect x="1312" y="211" width="2" height="2" fill="#808000"/>
<rect x="1314" y="214" width="2" height="2" fill="#808000"/>
<rect x="1317" y="216" width="2" height="2" fill="#808000"/>
<rect x="1320" y="219" width="2" height="2" fill="#808000"/>
<rect x="1322" y="220" width="2" height="2" fill="#808000"/>
<rect x="1324" y="222" width="2" height="2" fill="#808000"/>
<rect x="1327" y="223" width="2" height="2" fill="#808000"/>
<rect x="1330" y="224" width="2" height="2" fill="#808000"/>
<rect x="1332" y="225" width="2" height="2" fill="#808000"/>
<rect x="1334" y="226" width="2" height="2" fill="#808000"/>
<rect x="1337" y="227" width="2" height="2" fill="#808000"/>
<rect x="1340" y="228" width="2" height="2" fill="#808000"/>
<rect x="1342" y="228" width="2" height="2" fill="#808000"/>
<rect x="1344" y="229" width="2" height="2" fill="#808000"/>
<rect x="1347" y="229" width="2" height="2" fill="#808000"/>
<rect x="1350" y="230" width="2" height="2" fill="#808000"/>
<rect x="1352" y="230" width="2" height="2" fill="#808000"/>
<rect x="1354" y="230" width="2" height="2" fill="#808000"/>
<rect x="1357" y="231" width="2" height="2" fill="#808000"/>
<rect x="1360" y="231" width="2" height="2" fill="#808000"/>
<rect x="1362" y="231" width="2" height="2" fill="#808000"/>
<rect x="1364" y="231" width="2" height="2" fill="#808000"/>
<rect x="1367" y="231" width="2" height="2" fill="#808000"/>
<rect x="1370" y="230" width="2" height="2" fill="#808000"/>
<rect x="1372" y="230" width="2" height="2" fill="#808000"/>
<rect x="1374" y="230" width="2" height="2" fill="#808000"/>
<rect x="1377" y="229" width="2" height="2" fill="#808000"/>
<rect x="1380" y="229" width="2" height="2" fill="#808000"/>
<rect x="1382" y="229" width="2" height="2" fill="#808000"/>
<path d="M1133.5,377.5 L1129.5,369.5 L1137.5,369.5 Z" fill="none" stroke="#ff0000" stroke-width="1"/>
<path d="M1223.5,328.5 L1219.5,320.5 L1227.5,320.5 Z" fill="none" stroke="#00ff00" stroke-width="1"/>
<path d="M1383.5,234.5 L1379.5,226.5 L1387.5,226.5 Z" fill="none" stroke="#0000ff" stroke-width="1"/>
<rect x="685" y="530" width="1" height="408" fill="#c0c0c0" stroke="none" stroke-width="1" rx="0" />
<rect x="816" y="540" width="1" height="398" fill="#c0c0c0" stroke="none" stroke-width="1" rx="0" />
<rect x="946" y="540" width="1" height="398" fill="#c0c0c0" stroke="none" stroke-width="1" rx="0" />
<rect x="1077" y="540" width="1" height="398" fill="#c0c0c0" stroke="none" stroke-width="1" rx="0" />
<rect x="680" y="540" width="398" height="1" fill="#c0c0c0" stroke="none" stroke-width="1" rx="0" />
<text x="658" y="544.6" font-size="10.5" fill="#1f1f1f" stroke="#1f1f1f" stroke-width="0.1" text-anchor="start" font-weight="normal" >8</text>
<rect x="680" y="605" width="398" height="1" fill="#c0c0c0" stroke="none" stroke-width="1" rx="0" />
<text x="658" y="607.7" font-size="10.5" fill="#1f1f1f" stroke="#1f1f1f" stroke-width="0.1" text-anchor="start" font-weight="normal" >6.83</text>
<rect x="680" y="671" width="398" height="1" fill="#c0c0c0" stroke="none" stroke-width="1" rx="0" />
<text x="658" y="673.7" font-size="10.5" fill="#1f1f1f" stroke="#1f1f1f" stroke-width="0.1" text-anchor="start" font-weight="normal" >5.67</text>
<rect x="680" y="736" width="398" height="1" fill="#c0c0c0" stroke="none" stroke-width="1" rx="0" />
<text x="658" y="738.7" font-size="10.5" fill="#1f1f1f" stroke="#1f1f1f" stroke-width="0.1" text-anchor="start" font-weight="normal" >4.5</text>
<rect x="680" y="801" width="398" height="1" fill="#c0c0c0" stroke="none" stroke-width="1" rx="0" />
<text x="658" y="803.7" font-size="10.5" fill="#1f1f1f" stroke="#1f1f1f" stroke-width="0.1" text-anchor="start" font-weight="normal" >3.33</text>
<rect x="680" y="867" width="398" height="1" fill="#c0c0c0" stroke="none" stroke-width="1" rx="0" />
<text x="658" y="869.7" font-size="10.5" fill="#1f1f1f" stroke="#1f1f1f" stroke-width="0.1" text-anchor="start" font-weight="normal" >2.17</text>
<rect x="680" y="932" width="398" height="1" fill="#c0c0c0" stroke="none" stroke-width="1" rx="0" />
<text x="658" y="934.7" font-size="10.5" fill="#1f1f1f" stroke="#1f1f1f" stroke-width="0.1" text-anchor="start" font-weight="normal" >1.0</text>
<text x="665" y="946.8" font-size="10.5" fill="#1f1f1f" stroke="#1f1f1f" stroke-width="0.1" text-anchor="start" font-weight="normal" >1.800M</text>
<text x="796" y="946.8" font-size="10.5" fill="#1f1f1f" stroke="#1f1f1f" stroke-width="0.1" text-anchor="start" font-weight="normal" >134.5M</text>
<text x="926" y="946.8" font-size="10.5" fill="#1f1f1f" stroke="#1f1f1f" stroke-width="0.1" text-anchor="start" font-weight="normal" >267.3M</text>
<text x="1057" y="946.8" font-size="10.5" fill="#1f1f1f" stroke="#1f1f1f" stroke-width="0.1" text-anchor="start" font-weight="normal" >400.0M</text>
<rect x="684" y="921" width="2" height="2" fill="#808000"/>
<rect x="688" y="925" width="2" height="2" fill="#808000"/>
<rect x="692" y="925" width="2" height="2" fill="#808000"/>
<rect x="696" y="925" width="2" height="2" fill="#808000"/>
<rect x="700" y="925" width="2" height="2" fill="#808000"/>
<rect x="704" y="925" width="2" height="2" fill="#808000"/>
<rect x="708" y="925" width="2" height="2" fill="#808000"/>
<rect x="711" y="924" width="2" height="2" fill="#808000"/>
<rect x="715" y="924" width="2" height="2" fill="#808000"/>
<rect x="719" y="924" width="2" height="2" fill="#808000"/>
<rect x="723" y="924" width="2" height="2" fill="#808000"/>
<rect x="727" y="923" width="2" height="2" fill="#808000"/>
<rect x="731" y="923" width="2" height="2" fill="#808000"/>
<rect x="735" y="923" width="2" height="2" fill="#808000"/>
<rect x="739" y="922" width="2" height="2" fill="#808000"/>
<rect x="743" y="922" width="2" height="2" fill="#808000"/>
<rect x="747" y="922" width="2" height="2" fill="#808000"/>
<rect x="751" y="921" width="2" height="2" fill="#808000"/>
<rect x="755" y="921" width="2" height="2" fill="#808000"/>
<rect x="758" y="921" width="2" height="2" fill="#808000"/>
<rect x="762" y="920" width="2" height="2" fill="#808000"/>
<rect x="766" y="920" width="2" height="2" fill="#808000"/>
<rect x="770" y="920" width="2" height="2" fill="#808000"/>
<rect x="774" y="919" width="2" height="2" fill="#808000"/>
<rect x="778" y="919" width="2" height="2" fill="#808000"/>
<rect x="782" y="919" width="2" height="2" fill="#808000"/>
<rect x="786" y="918" width="2" height="2" fill="#808000"/>
<rect x="790" y="918" width="2" height="2" fill="#808000"/>
<rect x="794" y="917" width="2" height="2" fill="#808000"/>
<rect x="798" y="917" width="2" height="2" fill="#808000"/>
<rect x="802" y="917" width="2" height="2" fill="#808000"/>
<rect x="806" y="916" width="2" height="2" fill="#808000"/>
<rect x="809" y="916" width="2" height="2" fill="#808000"/>
<rect x="813" y="916" width="2" height="2" fill="#808000"/>
<rect x="817" y="915" width="2" height="2" fill="#808000"/>
<rect x="821" y="915" width="2" height="2" fill="#808000"/>
<rect x="825" y="914" width="2" height="2" fill="#808000"/>
<rect x="829" y="914" width="2" height="2" fill="#808000"/>
<rect x="833" y="914" width="2" height="2" fill="#808000"/>
<rect x="837" y="913" width="2" height="2" fill="#808000"/>
<rect x="841" y="913" width="2" height="2" fill="#808000"/>
<rect x="845" y="913" width="2" height="2" fill="#808000"/>
<rect x="849" y="912" width="2" height="2" fill="#808000"/>
<rect x="853" y="912" width="2" height="2" fill="#808000"/>
<rect x="856" y="912" width="2" height="2" fill="#808000"/>
<rect x="860" y="911" width="2" height="2" fill="#808000"/>
<rect x="864" y="911" width="2" height="2" fill="#808000"/>
<rect x="868" y="911" width="2" height="2" fill="#808000"/>
<rect x="872" y="911" width="2" height="2" fill="#808000"/>
<rect x="876" y="911" width="2" height="2" fill="#808000"/>
<rect x="880" y="910" width="2" height="2" fill="#808000"/>
<rect x="884" y="910" width="2" height="2" fill="#808000"/>
<rect x="888" y="910" width="2" height="2" fill="#808000"/>
<rect x="892" y="911" width="2" height="2" fill="#808000"/>
<rect x="896" y="911" width="2" height="2" fill="#808000"/>
<rect x="900" y="912" width="2" height="2" fill="#808000"/>
<rect x="904" y="913" width="2" height="2" fill="#808000"/>
<rect x="907" y="914" width="2" height="2" fill="#808000"/>
<rect x="911" y="916" width="2" height="2" fill="#808000"/>
<rect x="915" y="919" width="2" height="2" fill="#808000"/>
<rect x="919" y="922" width="2" height="2" fill="#808000"/>
<rect x="923" y="922" width="2" height="2" fill="#808000"/>
<rect x="927" y="911" width="2" height="2" fill="#808000"/>
<rect x="931" y="864" width="2" height="2" fill="#808000"/>
<rect x="935" y="572" width="2" height="2" fill="#808000"/>
<rect x="939" y="651" width="2" height="2" fill="#808000"/>
<rect x="943" y="788" width="2" height="2" fill="#808000"/>
<rect x="947" y="829" width="2" height="2" fill="#808000"/>
<rect x="951" y="848" width="2" height="2" fill="#808000"/>
<rect x="954" y="858" width="2" height="2" fill="#808000"/>
<rect x="958" y="864" width="2" height="2" fill="#808000"/>
<rect x="962" y="868" width="2" height="2" fill="#808000"/>
<rect x="966" y="871" width="2" height="2" fill="#808000"/>
<rect x="970" y="874" width="2" height="2" fill="#808000"/>
<rect x="974" y="875" width="2" height="2" fill="#808000"/>
<rect x="978" y="877" width="2" height="2" fill="#808000"/>
<rect x="982" y="878" width="2" height="2" fill="#808000"/>
<rect x="986" y="879" width="2" height="2" fill="#808000"/>
<rect x="990" y="880" width="2" height="2" fill="#808000"/>
<rect x="994" y="881" width="2" height="2" fill="#808000"/>
<rect x="998" y="881" width="2" height="2" fill="#808000"/>
<rect x="1002" y="882" width="2" height="2" fill="#808000"/>
<rect x="1005" y="883" width="2" height="2" fill="#808000"/>
<rect x="1009" y="883" width="2" height="2" fill="#808000"/>
<rect x="1013" y="883" width="2" height="2" fill="#808000"/>
<rect x="1017" y="884" width="2" height="2" fill="#808000"/>
<rect x="1021" y="884" width="2" height="2" fill="#808000"/>
<rect x="1025" y="884" width="2" height="2" fill="#808000"/>
<rect x="1029" y="884" width="2" height="2" fill="#808000"/>
<rect x="1033" y="884" width="2" height="2" fill="#808000"/>
<rect x="1037" y="885" width="2" height="2" fill="#808000"/>
<rect x="1041" y="885" width="2" height="2" fill="#808000"/>
<rect x="1045" y="885" width="2" height="2" fill="#808000"/>
<rect x="1049" y="885" width="2" height="2" fill="#808000"/>
<rect x="1052" y="885" width="2" height="2" fill="#808000"/>
<rect x="1056" y="884" width="2" height="2" fill="#808000"/>
<rect x="1060" y="884" width="2" height="2" fill="#808000"/>
<rect x="1064" y="884" width="2" height="2" fill="#808000"/>
<rect x="1068" y="884" width="2" height="2" fill="#808000"/>
<rect x="1072" y="884" width="2" height="2" fill="#808000"/>
<rect x="1076" y="884" width="2" height="2" fill="#808000"/>
<path d="M685.5,926.5 L681.5,918.5 L689.5,918.5 Z" fill="none" stroke="#ff0000" stroke-width="1"/>
<path d="M826.5,919.5 L822.5,911.5 L830.5,911.5 Z" fill="none" stroke="#00ff00" stroke-width="1"/>
<path d="M1077.5,889.5 L1073.5,881.5 L1081.5,881.5 Z" fill="none" stroke="#0000ff" stroke-width="1"/>
<path d="M1118.5,518.5 L1118.8,533.2 L1124.2,528.8 L1130.6,528.6 Z" fill="#000" stroke="#fff" stroke-width="1.3" stroke-linejoin="round"/>
</svg></body></html>
